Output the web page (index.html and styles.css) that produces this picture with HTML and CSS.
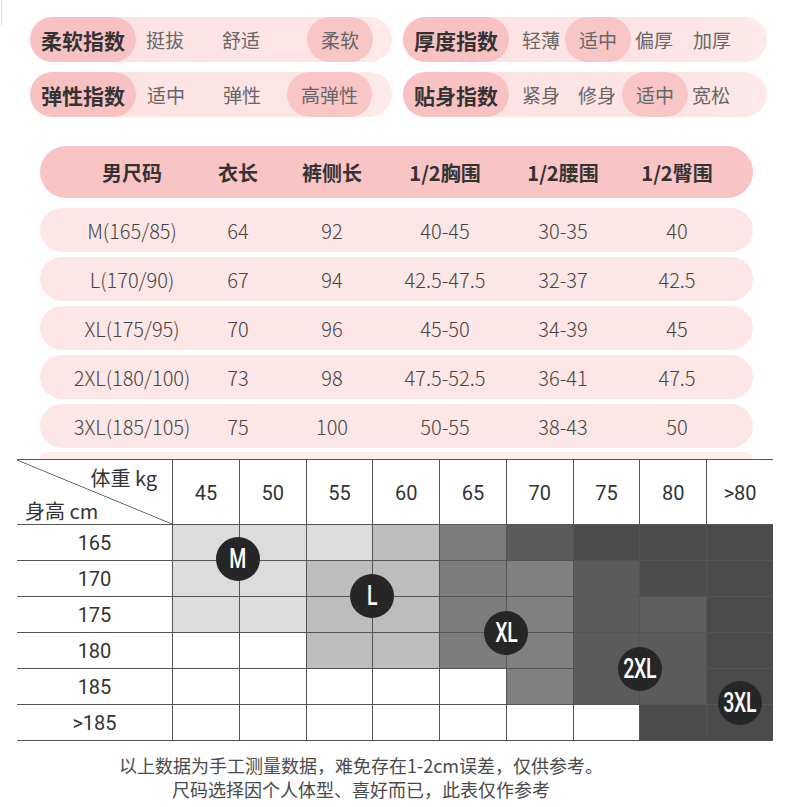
FILE: index.html
```html
<!DOCTYPE html>
<html lang="zh-CN">
<head>
<meta charset="utf-8">
<title>尺码表</title>
<link rel="stylesheet" href="styles.css">
</head>
<body>
<div class="page">
  <div class="indexes">
    <div class="idx">
      <span class="idx-label">柔软指数</span>
      <span class="opt ml10">挺拔</span>
      <span class="opt ml38">舒适</span>
      <span class="opt on ml47">柔软</span>
    </div>
    <div class="idx">
      <span class="idx-label">厚度指数</span>
      <span class="opt ml13">轻薄</span>
      <span class="opt on ml5">适中</span>
      <span class="opt ml4">偏厚</span>
      <span class="opt ml20">加厚</span>
    </div>
    <div class="idx">
      <span class="idx-label">弹性指数</span>
      <span class="opt ml11">适中</span>
      <span class="opt ml38">弹性</span>
      <span class="opt on ml26">高弹性</span>
    </div>
    <div class="idx">
      <span class="idx-label">贴身指数</span>
      <span class="opt ml13">紧身</span>
      <span class="opt ml18">修身</span>
      <span class="opt on ml6">适中</span>
      <span class="opt ml4">宽松</span>
    </div>
  </div>

  <div class="size-table">
    <div class="srow shead">
      <span>男尺码</span><span>衣长</span><span>裤侧长</span><span>1/2胸围</span><span>1/2腰围</span><span>1/2臀围</span>
    </div>
    <div class="srow">
      <span>M(165/85)</span><span>64</span><span>92</span><span>40-45</span><span>30-35</span><span>40</span>
    </div>
    <div class="srow">
      <span>L(170/90)</span><span>67</span><span>94</span><span>42.5-47.5</span><span>32-37</span><span>42.5</span>
    </div>
    <div class="srow">
      <span>XL(175/95)</span><span>70</span><span>96</span><span>45-50</span><span>34-39</span><span>45</span>
    </div>
    <div class="srow">
      <span>2XL(180/100)</span><span>73</span><span>98</span><span>47.5-52.5</span><span>36-41</span><span>47.5</span>
    </div>
    <div class="srow">
      <span>3XL(185/105)</span><span>75</span><span>100</span><span>50-55</span><span>38-43</span><span>50</span>
    </div>
    <div class="peek"></div>
  </div>

  <div class="chart">
    <div class="corner"><span class="w">体重 kg</span><span class="h">身高 cm</span></div>
    <div class="hc">45</div><div class="hc">50</div><div class="hc">55</div><div class="hc">60</div><div class="hc">65</div><div class="hc">70</div><div class="hc">75</div><div class="hc">80</div><div class="hc">&gt;80</div>

    <div class="rl">165</div>
    <div class="c l1"></div><div class="c l1"></div><div class="c l1"></div><div class="c l2"></div><div class="c l3a"></div><div class="c l4"></div><div class="c l5"></div><div class="c l5"></div><div class="c l5"></div>

    <div class="rl">170</div>
    <div class="c l1"></div><div class="c l1"></div><div class="c l2"></div><div class="c l2"></div><div class="c l3a"></div><div class="c l3"></div><div class="c l4"></div><div class="c l5"></div><div class="c l5"></div>

    <div class="rl">175</div>
    <div class="c l1"></div><div class="c l1"></div><div class="c l2"></div><div class="c l2"></div><div class="c l3a"></div><div class="c l3"></div><div class="c l4"></div><div class="c l4b"></div><div class="c l5"></div>

    <div class="rl">180</div>
    <div class="c"></div><div class="c"></div><div class="c l2"></div><div class="c l2"></div><div class="c l3a"></div><div class="c l3"></div><div class="c l4"></div><div class="c l4"></div><div class="c l5"></div>

    <div class="rl">185</div>
    <div class="c"></div><div class="c"></div><div class="c"></div><div class="c"></div><div class="c"></div><div class="c l3"></div><div class="c l4"></div><div class="c l4"></div><div class="c l5"></div>

    <div class="rl">&gt;185</div>
    <div class="c"></div><div class="c"></div><div class="c"></div><div class="c"></div><div class="c"></div><div class="c"></div><div class="c"></div><div class="c l5"></div><div class="c l5"></div>

    <span class="badge b-m"><b>M</b></span>
    <span class="badge b-l"><b>L</b></span>
    <span class="badge b-xl"><b>XL</b></span>
    <span class="badge b-2xl"><b>2XL</b></span>
    <span class="badge b-3xl"><b>3XL</b></span>
  </div>

  <div class="note">
    <p>以上数据为手工测量数据，难免存在1-2cm误差，仅供参考。</p>
    <p>尺码选择因个人体型、喜好而已，此表仅作参考</p>
  </div>
</div>
</body>
</html>
```

FILE: styles.css
```css
* { box-sizing: border-box; }
html, body { margin: 0; padding: 0; background: #fff; }
body {
  font-family: "Noto Sans CJK SC", "Noto Sans", sans-serif;
  color: #333;
}
.page {
  width: 789px;
  height: 807px;
  overflow: hidden;
  position: relative;
}
.page::before {
  content: "";
  position: absolute;
  left: 1px;
  top: 0;
  width: 1px;
  height: 26px;
  background: #ddd;
}

/* index pills */
.indexes {
  display: grid;
  grid-template-columns: 362px 364px;
  column-gap: 11px;
  row-gap: 10px;
  padding: 17px 0 0 30px;
}
.idx {
  height: 45px;
  border-radius: 23px;
  background: linear-gradient(to right, #fde3e3 0%, #fde5e5 80%, #fdeaea 100%);
  display: flex;
  align-items: center;
}
.idx-label {
  width: 106px;
  height: 45px;
  border-radius: 23px;
  background: #f9c2c2;
  display: flex;
  align-items: center;
  justify-content: center;
  font-size: 21px;
  font-weight: 700;
  color: #333;
}
.opt {
  font-size: 19px;
  color: #666;
  line-height: 45px;
  white-space: nowrap;
}
.opt.on {
  height: 45px;
  padding: 0 14px;
  border-radius: 23px;
  background: #f9c6c6;
}
.ml4 { margin-left: 4px; }
.ml5 { margin-left: 5px; }
.ml6 { margin-left: 6px; }
.ml10 { margin-left: 10px; }
.ml11 { margin-left: 11px; }
.ml13 { margin-left: 13px; }
.ml18 { margin-left: 18px; }
.ml20 { margin-left: 20px; }
.ml26 { margin-left: 26px; }
.ml38 { margin-left: 38px; }
.ml47 { margin-left: 47px; }

/* size table */
.size-table {
  margin: 29px 0 0 40px;
  width: 713px;
  display: flex;
  flex-direction: column;
  gap: 5px;
}
.srow {
  height: 44px;
  border-radius: 22px;
  background: #fde6e6;
  display: grid;
  grid-template-columns: 106px 106px 82px 144px 92px 136px;
  padding-left: 39px;
  align-items: center;
  justify-items: center;
  font-size: 20px;
  font-weight: 300;
  color: #444;
  white-space: nowrap;
}
.srow span { text-align: center; }
.shead {
  height: 52px;
  border-radius: 26px;
  background: #f9c4c4;
  font-size: 20px;
  font-weight: 700;
  color: #333;
  margin-bottom: 5px;
}
.peek {
  height: 7px;
  margin-top: -1px;
  border-radius: 22px 22px 0 0;
  background: #fdeded;
}

/* weight / height chart */
.chart {
  position: relative;
  margin-left: 17px;
  width: 756px;
  display: grid;
  grid-template-columns: 155px repeat(9, 1fr);
  grid-template-rows: 64px repeat(6, 35px);
  gap: 1px;
  background: #555;
  border-top: 1px solid #555;
  border-bottom: 1px solid #555;
}
.corner {
  background: #fff linear-gradient(to top right, #fff calc(50% - 0.8px), #555 50%, #fff calc(50% + 0.8px));
  display: flex;
  flex-direction: column;
  justify-content: space-between;
  padding: 5px 15px 0 8px;
  font-size: 20px;
  color: #333;
  line-height: 26px;
}
.corner .w { align-self: flex-end; }
.corner .h { align-self: flex-start; }
.hc, .rl {
  background: #fff;
  display: flex;
  align-items: center;
  justify-content: center;
  font-family: Roboto, "Liberation Sans", sans-serif;
  font-size: 20px;
  color: #333;
}
.hc { padding-top: 2px; }
.c { background: #fff; }
.c.l1 { background: #dcdcdc; }
.c.l2 { background: #bdbdbd; }
.c.l3 { background: #808080; }
.c.l3a { background: #7d7d7d; }
.c.l4 { background: #5b5b5b; }
.c.l4b { background: #5f5f5f; }
.c.l5 { background: #4b4b4b; }

.badge {
  position: absolute;
  width: 44px;
  height: 44px;
  margin: -22px 0 0 -22px;
  border-radius: 50%;
  background: #262626;
  display: flex;
  align-items: center;
  justify-content: center;
  color: #fff;
  font-family: Roboto, "Liberation Sans", sans-serif;
  font-size: 27px;
  font-weight: 500;
}
.badge b {
  font-weight: 500;
  display: inline-block;
  transform: scaleX(0.72);
  letter-spacing: -0.5px;
}
.b-m { left: 221px; top: 99px; }
.b-l { left: 355px; top: 136px; }
.b-xl { left: 489px; top: 173px; }
.b-2xl { left: 623px; top: 209px; }
.b-3xl { left: 723px; top: 243px; }

/* note */
.note {
  width: 722px;
  margin-top: 12px;
  text-align: center;
  font-size: 18px;
  color: #4a4a4a;
  line-height: 24px;
}
.note p { margin: 0; }
```
